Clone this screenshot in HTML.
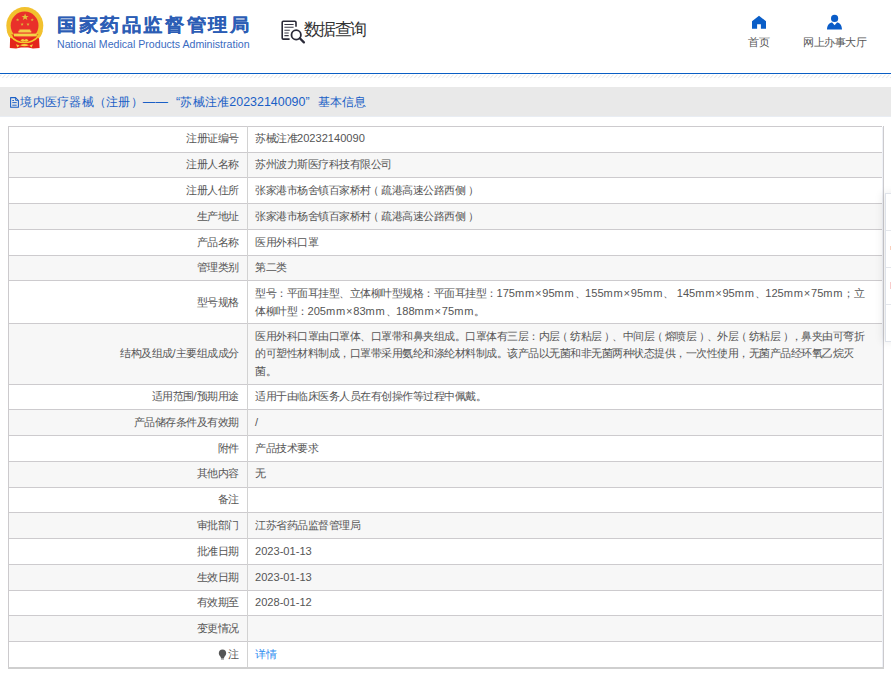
<!DOCTYPE html>
<html><head><meta charset="utf-8">
<style>
html,body{margin:0;padding:0;}
body{width:891px;height:675px;overflow:hidden;position:relative;background:#fff;font-family:"Liberation Sans",sans-serif;color:#555;}
.abs{position:absolute;}
.title{position:absolute;left:57px;top:11.4px;font-size:19.6px;letter-spacing:1.6px;font-weight:700;-webkit-text-stroke:0.12px #2c5db5;transform:scaleY(0.93);transform-origin:0 0;color:#2c5db5;white-space:nowrap;line-height:28px;}
.en{position:absolute;left:57px;top:38px;font-size:10.6px;color:#3a6bbf;white-space:nowrap;line-height:13px;}
.sj{position:absolute;left:304.3px;top:18px;font-size:17px;letter-spacing:-1.8px;color:#333;white-space:nowrap;line-height:24px;}
.nav{position:absolute;font-size:10.8px;color:#555;white-space:nowrap;line-height:14px;}
.bline{position:absolute;left:0;top:73px;width:891px;height:1px;background:#0a5ec4;}
.hatch{position:absolute;left:0;top:74px;width:891px;height:5px;}
.bar{position:absolute;left:0;top:87px;width:891px;height:29px;background:#e9e9e9;}
.bartxt{position:absolute;left:20.3px;top:93px;font-size:12.4px;letter-spacing:0.25px;color:#1a5fc6;white-space:nowrap;line-height:18px;}
.bartxt .a2{font-size:12.45px;letter-spacing:0;}
.lq{display:inline-block;width:12.25px;text-align:right;}
.rq{display:inline-block;width:12.25px;text-align:left;}
.tbl{position:absolute;left:8px;top:0;width:876px;height:675px;}
.row{position:absolute;left:0;width:874px;border-top:1px solid #cdcbce;box-sizing:border-box;}
.lab{position:absolute;right:643.3px;font-size:10.6px;letter-spacing:-0.5px;line-height:17.25px;white-space:nowrap;color:#555;}
.val{position:absolute;left:247px;font-size:10.6px;letter-spacing:-0.5px;line-height:17.25px;white-space:nowrap;color:#555;}
.a{font-size:11.1px;letter-spacing:0;}
.m{letter-spacing:0.75px;}
.lp{position:relative;left:-2.5px;}
.rp{position:relative;left:2.5px;}
.vsep{position:absolute;left:239px;top:126px;width:1px;height:541px;background:#d2d2d2;}
.rlite{position:absolute;left:874px;top:127px;width:1px;height:540px;background:#eef0f6;}
.lbord{position:absolute;left:0;top:126px;width:1px;height:542px;background:#cccacd;}
.rbord{position:absolute;left:875px;top:126px;width:1px;height:542px;background:#cbcacd;}
.bbord{position:absolute;left:0;top:667px;width:876px;height:2px;background:#cfcfcf;}
.panel{position:absolute;left:885px;top:193px;width:20px;height:147px;background:#fff;border:1px solid #dfe3ea;box-shadow:-3px 0 8px rgba(0,0,0,.08);}
</style></head><body>
<!-- emblem -->
<svg class="abs" style="left:0;top:0" width="50" height="52" viewBox="0 0 50 52">
  <defs><clipPath id="ctop"><rect x="0" y="0" width="50" height="37.5"/></clipPath></defs>
  <circle cx="24.8" cy="25.6" r="18.5" fill="#f2c12e" clip-path="url(#ctop)"/>
  <path d="M10.2 34.5 L38.9 34.5 L39.6 48 L33 48.6 L28 47.6 L21 47.6 L16 48.6 L9.8 48 Z" fill="#e4261c"/>
  <path d="M6.6 30 Q8 37 11.5 38.5 L13 36 Z M43 30 Q41.6 37 38.1 38.5 L36.6 36 Z" fill="#f2c12e"/>
  <circle cx="24.6" cy="25.5" r="13.9" fill="#e9302a"/>
  <path d="M25.1 13.4l.95 2.5h2.6l-2.1 1.6.8 2.5-2.25-1.55-2.25 1.55.8-2.5-2.1-1.6h2.6z" fill="#e2c23a"/>
  <path d="M17.6 18.2l.45 1.15h1.2l-.95.75.35 1.15-1.05-.7-1.05.7.35-1.15-.95-.75h1.2z" fill="#d9b83a"/>
  <path d="M32.2 18.2l.45 1.15h1.2l-.95.75.35 1.15-1.05-.7-1.05.7.35-1.15-.95-.75h1.2z" fill="#d9b83a"/>
  <path d="M22.1 22.7l.45 1.15h1.2l-.95.75.35 1.15-1.05-.7-1.05.7.35-1.15-.95-.75h1.2z" fill="#d9b83a"/>
  <path d="M28 22.7l.45 1.15h1.2l-.95.75.35 1.15-1.05-.7-1.05.7.35-1.15-.95-.75h1.2z" fill="#d9b83a"/>
  <path d="M19.4 29.4h10.9v1.3h1v1.9h-12.9v-1.9h1z" fill="#f3d04a"/>
  <path d="M13.9 33.6h22.9v2.8h-22.9z" fill="#f5d348"/>
  <path d="M11 36.2 Q16 42.6 24.5 42.6 Q33 42.6 38.4 36.2" stroke="#f4c92e" stroke-width="1.5" fill="none"/>
  <path d="M20.4 40.6 Q22.4 37.8 24.5 40 Q26.6 37.8 28.6 40.6 Q26.6 42.4 24.5 41.2 Q22.4 42.4 20.4 40.6z" fill="#f5cf3c"/>
  <path d="M20 45.2 Q24.5 42.6 29 45.2 Q24.5 47.4 20 45.2z" fill="#f5d040"/>
  <path d="M16 44.2 L19.6 45.6 L17.4 47.6 Z M33 44.2 L29.4 45.6 L31.6 47.6 Z" fill="#f3cf45"/>
</svg>
<div class="title">国家药品监督管理局</div>
<div class="en">National Medical Products Administration</div>
<!-- search doc icon -->
<svg class="abs" style="left:278px;top:16px" width="30" height="30" viewBox="278 16 30 30">
  <path d="M296 26.8V22.4Q296 21.3 294.9 21.3H283.3Q282.2 21.3 282.2 22.4V38Q282.2 39.1 283.3 39.1H289.6" stroke="#2a2a38" stroke-width="1.6" fill="none"/>
  <path d="M284.4 24.4H293.6M284.4 27.3H293.6M284.4 30.2H289.8M284.4 32.9H288.7M284.4 35.6H288.7" stroke="#3a3a48" stroke-width="1.05"/>
  <circle cx="296.2" cy="34.9" r="4.7" stroke="#2a2a38" stroke-width="1.8" fill="none"/>
  <path d="M299.8 38.3L303.9 42.4" stroke="#2a2a38" stroke-width="2.3" stroke-linecap="round"/>
</svg>
<div class="sj">数据查询</div>
<!-- home -->
<svg class="abs" style="left:752px;top:15px" width="14" height="14" viewBox="0 0 14 14">
  <path d="M7 0.7L0 6.3V13.8h5.1V9.3h3.8v4.5H14V6.3z" fill="#0a5ec8"/>
</svg>
<div class="nav" style="left:748px;top:35px;letter-spacing:-0.1px">首页</div>
<!-- person -->
<svg class="abs" style="left:827px;top:14px" width="15" height="16" viewBox="0 0 15 16">
  <circle cx="7.6" cy="4.45" r="3.6" fill="#0a5cc8"/>
  <path d="M0 15.6C0 11 2.8 8.6 5.2 8.6L7.6 11.3 10 8.6c2.4 0 5 2.4 5 7z" fill="#0a5cc8"/>
</svg>
<div class="nav" style="left:803px;top:35px;letter-spacing:-0.5px">网上办事大厅</div>
<div class="bline"></div>
<svg class="hatch" width="891" height="5" viewBox="0 0 891 5"><defs><pattern id="hp" width="4" height="5" patternUnits="userSpaceOnUse" x="1.9"><path d="M0.2 4.2L3.6 0.6" stroke="#dcdcdc" stroke-width="0.85"/></pattern></defs><rect width="891" height="5" fill="url(#hp)"/></svg>
<div class="bar"></div>
<div class="abs" style="left:0;top:116px;width:891px;height:1px;background:#e9edf3"></div>
<svg class="abs" style="left:6px;top:92px" width="20" height="20" viewBox="6 92 20 20">
  <path d="M10.6 97.6H15.5L18.4 100.5V107.2H10.6Z" stroke="#1a5fc6" stroke-width="1.05" fill="none" stroke-linejoin="round"/>
  <path d="M15.6 97.8V100.4H18.2" stroke="#1a5fc6" stroke-width="0.9" fill="none"/>
  <path d="M12.3 100.5H14M12.3 102.6H16.7M12.3 105.2H16.7" stroke="#1a5fc6" stroke-width="0.95"/>
</svg>
<div class="bartxt">境内医疗器械（注册）——<span class="lq">“</span>苏械注准<span class="a2">20232140090</span><span class="rq">”</span>基本信息</div>
<div class="tbl">
<div class="row" style="top:126px;height:26px;background:#fff"><div class="lab" style="top:3.32px">注册证编号</div><div class="val" style="top:3.32px">苏械注准<span class="a">20232140090</span></div></div>
<div class="row" style="top:152px;height:25px;background:#f7f7f7"><div class="lab" style="top:2.97px">注册人名称</div><div class="val" style="top:2.97px">苏州波力斯医疗科技有限公司</div></div>
<div class="row" style="top:177px;height:26px;background:#fff"><div class="lab" style="top:3.83px">注册人住所</div><div class="val" style="top:3.83px">张家港市杨舍镇百家桥村<span class="lp">（</span>疏港高速公路西侧<span class="rp">）</span></div></div>
<div class="row" style="top:203px;height:26px;background:#f7f7f7"><div class="lab" style="top:3.83px">生产地址</div><div class="val" style="top:3.83px">张家港市杨舍镇百家桥村<span class="lp">（</span>疏港高速公路西侧<span class="rp">）</span></div></div>
<div class="row" style="top:229px;height:26px;background:#fff"><div class="lab" style="top:3.62px">产品名称</div><div class="val" style="top:3.62px">医用外科口罩</div></div>
<div class="row" style="top:255px;height:25px;background:#f7f7f7"><div class="lab" style="top:3.33px">管理类别</div><div class="val" style="top:3.33px">第二类</div></div>
<div class="row" style="top:280px;height:43px;background:#fff"><div class="lab" style="top:12.78px">型号规格</div><div class="val" style="top:4.25px">型号：平面耳挂型、立体柳叶型规格：平面耳挂型：<span class="a">175<span class="m">mm×</span>95<span class="m">mm</span></span>、<span class="a">155<span class="m">mm×</span>95<span class="m">mm</span></span>、<span class="a"> 145<span class="m">mm×</span>95<span class="m">mm</span></span>、<span class="a">125<span class="m">mm×</span>75<span class="m">mm</span></span>；立<br>体柳叶型：<span class="a">205<span class="m">mm×</span>83<span class="m">mm</span></span>、<span class="a">188<span class="m">mm×</span>75<span class="m">mm</span></span>。</div></div>
<div class="row" style="top:323px;height:61px;background:#f7f7f7"><div class="lab" style="top:21.27px">结构及组成<span class="a">/</span>主要组成成分</div><div class="val" style="top:4.12px">医用外科口罩由口罩体、口罩带和鼻夹组成。口罩体有三层：内层<span class="lp">（</span>纺粘层<span class="rp">）</span>、中间层<span class="lp">（</span>熔喷层<span class="rp">）</span>、外层<span class="lp">（</span>纺粘层<span class="rp">）</span>，鼻夹由可弯折<br>的可塑性材料制成，口罩带采用氨纶和涤纶材料制成。该产品以无菌和非无菌两种状态提供，一次性使用，无菌产品经环氧乙烷灭<br>菌。</div></div>
<div class="row" style="top:384px;height:25px;background:#fff"><div class="lab" style="top:2.98px">适用范围<span class="a">/</span>预期用途</div><div class="val" style="top:2.98px">适用于由临床医务人员在有创操作等过程中佩戴。</div></div>
<div class="row" style="top:409px;height:26px;background:#f7f7f7"><div class="lab" style="top:3.73px">产品储存条件及有效期</div><div class="val" style="top:3.73px"><span class="a">/</span></div></div>
<div class="row" style="top:435px;height:26px;background:#fff"><div class="lab" style="top:3.52px">附件</div><div class="val" style="top:3.52px">产品技术要求</div></div>
<div class="row" style="top:461px;height:26px;background:#f7f7f7"><div class="lab" style="top:3.37px">其他内容</div><div class="val" style="top:3.37px">无</div></div>
<div class="row" style="top:487px;height:25px;background:#fff"><div class="lab" style="top:3.17px">备注</div><div class="val" style="top:3.17px"></div></div>
<div class="row" style="top:512px;height:26px;background:#f7f7f7"><div class="lab" style="top:3.93px">审批部门</div><div class="val" style="top:3.93px">江苏省药品监督管理局</div></div>
<div class="row" style="top:538px;height:26px;background:#fff"><div class="lab" style="top:3.73px">批准日期</div><div class="val" style="top:3.73px"><span class="a">2023-01-13</span></div></div>
<div class="row" style="top:564px;height:26px;background:#f7f7f7"><div class="lab" style="top:3.52px">生效日期</div><div class="val" style="top:3.52px"><span class="a">2023-01-13</span></div></div>
<div class="row" style="top:590px;height:25px;background:#fff"><div class="lab" style="top:3.12px">有效期至</div><div class="val" style="top:3.12px"><span class="a">2028-01-12</span></div></div>
<div class="row" style="top:615px;height:26px;background:#f7f7f7"><div class="lab" style="top:3.72px">变更情况</div><div class="val" style="top:3.72px"></div></div>
<div class="row" style="top:641px;height:26px;background:#fff"><div class="lab" style="top:3.72px"><svg width="9" height="11" viewBox="0 0 9 11" style="vertical-align:-2px;margin-right:1px"><path d="M4.5 0.5C2.2 0.5 0.8 2.2 0.8 4.2c0 1.6 1 2.6 1.7 3.5.3.4.4.8.4 1.2h3.2c0-.4.1-.8.4-1.2.7-.9 1.7-1.9 1.7-3.5C8.2 2.2 6.8.5 4.5.5z" fill="#555"/><rect x="2.9" y="9.2" width="3.2" height="1.4" rx=".6" fill="#777"/></svg>注</div><div class="val" style="top:3.72px"><span style="color:#2d8cf0">详情</span></div></div>
<div class="vsep"></div>
<div class="lbord"></div>
<div class="rlite"></div>
<div class="rbord"></div>
<div class="bbord"></div>
</div>
<div class="panel"></div>
<div class="abs" style="left:886px;top:230px;width:5px;height:1px;background:#e4e7ec"></div>
<div class="abs" style="left:886px;top:267px;width:5px;height:1px;background:#e4e7ec"></div>
<div class="abs" style="left:886px;top:304px;width:5px;height:1px;background:#e4e7ec"></div>
<div class="abs" style="left:889.6px;top:246.4px;width:2px;height:3.8px;background:#fad0bd"></div>
<div class="abs" style="left:889.6px;top:282.3px;width:2px;height:6.3px;background:#f8cccc"></div>
</body></html>
